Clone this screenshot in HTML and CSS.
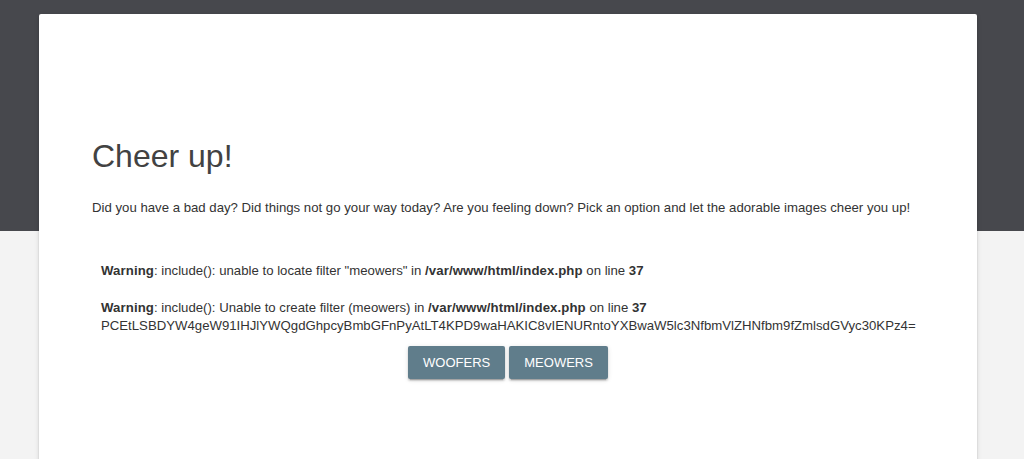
FILE: index.html
```html
<!DOCTYPE html>
<html lang="en">
  <head>
    <meta charset="UTF-8" />
    <meta name="viewport" content="width=device-width, initial-scale=1.0" />
    <title>Cheer up!</title>
    <link rel="stylesheet" href="styles.css">
  </head>
  <body>
    <div class="ribbon"></div>
    <main class="main">
      <div class="card">
        <h3>Cheer up!</h3>
        <p class="intro">Did you have a bad day? Did things not go your way today? Are you feeling down? Pick an option and let the adorable images cheer you up!</p>

        <div class="output">
          <br />
          <b>Warning</b>: include(): unable to locate filter "meowers" in <b>/var/www/html/index.php</b> on line <b>37</b><br />
          <br />
          <b>Warning</b>: include(): Unable to create filter (meowers) in <b>/var/www/html/index.php</b> on line <b>37</b><br />
          PCEtLSBDYW4geW91IHJlYWQgdGhpcyBmbGFnPyAtLT4KPD9waHAKIC8vIENURntoYXBwaW5lc3NfbmVlZHNfbm9fZmlsdGVyc30KPz4=
        </div>

        <div class="actions">
          <button class="btn">Woofers</button>
          <button class="btn">Meowers</button>
        </div>
      </div>
    </main>
  </body>
</html>
```

FILE: styles.css
```css
* {
  box-sizing: border-box;
}

body {
  margin: 0;
  background-color: #f3f3f3;
  font-family: "Liberation Sans", Arial, sans-serif;
  color: #333;
}

.ribbon {
  height: 231px;
  background-color: #47484d;
}

.main {
  margin-top: -217px;
  padding-left: 39px;
}

.card {
  width: 938px;
  min-height: 500px;
  background-color: #fff;
  border-radius: 2px;
  box-shadow: 0 2px 2px 0 rgba(0,0,0,0.14), 0 3px 1px -2px rgba(0,0,0,0.2), 0 1px 5px 0 rgba(0,0,0,0.12);
  padding: 118px 53px 40px;
}

h3 {
  margin: 0;
  font-size: 32px;
  font-weight: 400;
  line-height: 48px;
  color: #424242;
}

.intro {
  margin: 18px 0 0;
  font-size: 13.2px;
  line-height: 20px;
}

.output {
  margin-top: 25px;
  padding-left: 9px;
  font-size: 13.2px;
  line-height: 18.5px;
}

.output b {
  letter-spacing: 0.1px;
}

.actions {
  display: flex;
  justify-content: center;
  gap: 4px;
  margin-top: 10px;
}

.btn {
  height: 33px;
  padding: 0 15px;
  border: none;
  border-radius: 2px;
  background-color: #607d8b;
  color: #fff;
  font-family: "Liberation Sans", Arial, sans-serif;
  font-size: 13px;
  font-weight: 500;
  text-transform: uppercase;
  box-shadow: 0 2px 2px 0 rgba(0,0,0,0.14), 0 3px 1px -2px rgba(0,0,0,0.2), 0 1px 5px 0 rgba(0,0,0,0.12);
  cursor: pointer;
}
```
